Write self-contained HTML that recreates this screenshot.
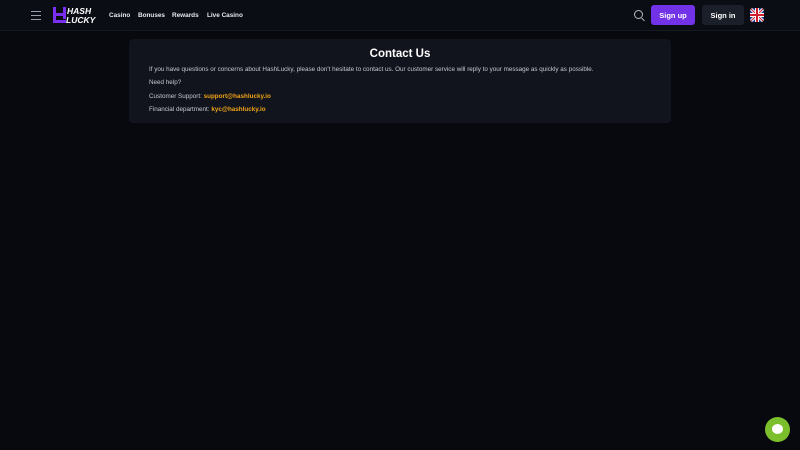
<!DOCTYPE html>
<html><head><meta charset="utf-8"><style>
*{margin:0;padding:0;box-sizing:border-box}
body{width:800px;height:450px;background:#07090f;font-family:"Liberation Sans",sans-serif;color:#fff;position:relative;overflow:hidden}
.hdr{height:31px;background:#0a0d14;border-bottom:1px solid #151922;position:relative}
.burger{position:absolute;left:31px;top:11px;width:10px}
.burger i{display:block;height:1px;background:#9aa0ab;margin-bottom:3px}
.logo{position:absolute;left:52px;top:6px}
.nav{position:absolute;left:109px;top:12px;font-size:6.4px;font-weight:bold;color:#e8e9ee}
.nav span{position:absolute;white-space:nowrap}
.search{position:absolute;left:634px;top:10px;width:9px;height:9px;border:1.3px solid #b8bcc5;border-radius:50%}
.search:after{content:"";position:absolute;width:4px;height:1.3px;background:#b8bcc5;left:6px;top:8px;transform:rotate(45deg)}
.btn{position:absolute;top:5px;height:20px;border-radius:3px;font-size:7.5px;font-weight:bold;display:flex;align-items:center;justify-content:center}
.up{left:651px;width:44px;background:#7132e8}
.in{left:702px;width:42px;background:#1b1f29}
.flag{position:absolute;left:750px;top:8px;width:14px;height:14px;border-radius:3px;overflow:hidden}
.card{position:absolute;left:129px;top:39px;width:542px;height:84px;background:#11141c;border-radius:4px}
h1{font-size:11.5px;text-align:center;margin-top:9px;font-weight:bold}
p{font-size:6.3px;color:#c5c8d0;position:absolute;left:20px}
b{color:#f0a318}
.chat{position:absolute;left:765px;top:417px;width:25px;height:25px;border-radius:50%;background:#7bbf2d}
.chat:after{content:"";position:absolute;left:7px;top:7px;width:11px;height:10px;border-radius:50%;background:#fff}
</style></head><body>
<div class="hdr">
<div class="burger"><i></i><i></i><i></i></div>
<svg class="logo" width="46" height="18" viewBox="0 0 46 18">
<path d="M1 1v16h13v-3H4v-4h7v3h3V1h-3v6H4V1z" fill="#7a2ff0"/>
<text x="15" y="8" font-family="Liberation Sans" font-style="italic" font-weight="bold" font-size="8.5" fill="#fff">HASH</text>
<text x="14" y="17" font-family="Liberation Sans" font-style="italic" font-weight="bold" font-size="8.5" fill="#fff">LUCKY</text>
</svg>
<div class="nav"><span style="left:0">Casino</span><span style="left:29px">Bonuses</span><span style="left:63px">Rewards</span><span style="left:98px">Live Casino</span></div>
<div class="search"></div>
<div class="btn up">Sign up</div>
<div class="btn in">Sign in</div>
<svg class="flag" viewBox="0 0 14 14"><rect width="14" height="14" fill="#1d3b8a"/><path d="M0 0L14 14M14 0L0 14" stroke="#fff" stroke-width="3"/><path d="M0 0L14 14M14 0L0 14" stroke="#d0202f" stroke-width="1"/><path d="M7 0V14M0 7H14" stroke="#fff" stroke-width="4"/><path d="M7 0V14M0 7H14" stroke="#d0202f" stroke-width="2"/></svg>
</div>
<div class="card">
<h1>Contact Us</h1>
<p style="top:27px">If you have questions or concerns about HashLucky, please don't hesitate to contact us. Our customer service will reply to your message as quickly as possible.</p>
<p style="top:40px">Need help?</p>
<p style="top:54px">Customer Support: <b>support@hashlucky.io</b></p>
<p style="top:67px">Financial department: <b>kyc@hashlucky.io</b></p>
</div>
<div class="chat"></div>
</body></html>
